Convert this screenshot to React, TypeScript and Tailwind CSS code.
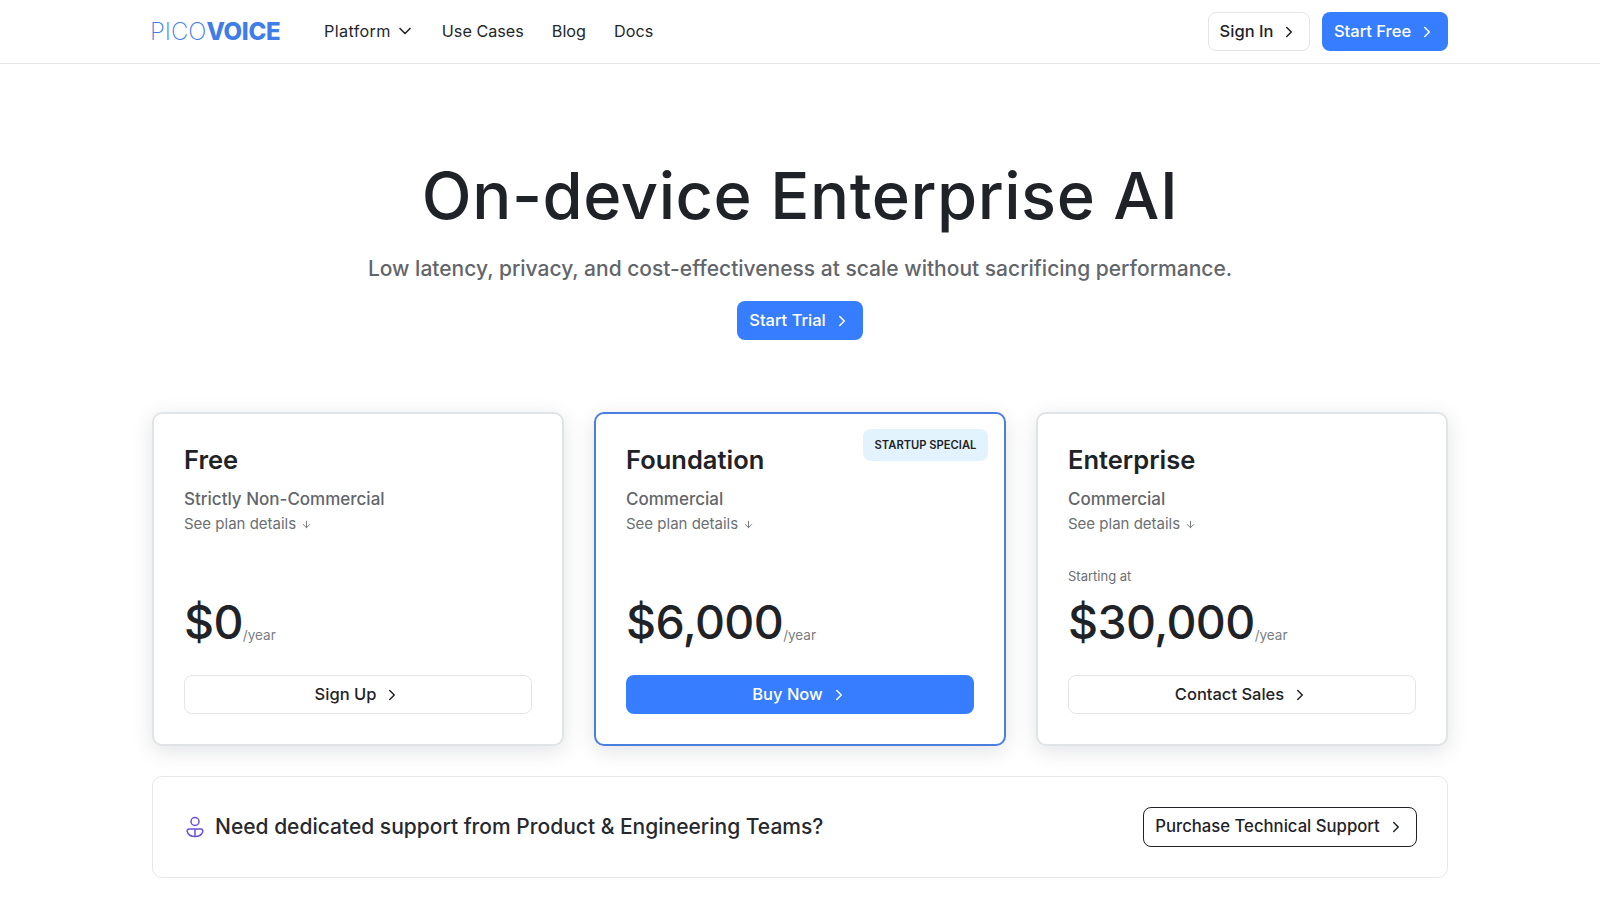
import { ChevronDown, ChevronRight, ArrowDown } from "lucide-react";

const plans = [
  { name: "Free", kind: "Strictly Non-Commercial", price: "$0", cta: "Sign Up" },
  { name: "Foundation", kind: "Commercial", price: "$6,000", cta: "Buy Now", featured: true },
  { name: "Enterprise", kind: "Commercial", price: "$30,000", cta: "Contact Sales", from: true },
];

function Chevron({ className = "" }: { className?: string }) {
  return <ChevronRight size={18} strokeWidth={2} className={className} />;
}

function SupportIcon() {
  return (
    <svg width="18" height="22" viewBox="0 0 18 22" fill="none" stroke="#6d4fd8" strokeWidth="1.5">
      <circle cx="9" cy="5.5" r="4" />
      <path d="M3 13h12a2 2 0 0 1 1.8 2.5C16 18.5 13 20.5 9 20.5S2 18.5 1.2 15.5A2 2 0 0 1 3 13Z" />
      <path d="M9 13v7.5" />
    </svg>
  );
}

export default function App() {
  return (
    <div className="min-h-[900px] overflow-hidden bg-white font-['Inter',sans-serif] text-[#1f2328]">
      <header className="h-[64px] border-b border-[#e3e5e7]">
        <div className="mx-auto flex h-[63px] w-[1296px] items-center">
          <div className="-ml-[2px] flex w-[132px] items-baseline text-[24px] leading-none text-[#3f7de8]">
            <span className="font-extralight">PICO</span>
            <span className="font-extrabold tracking-[-0.3px]">VOICE</span>
          </div>
          <nav className="ml-[42px] flex items-center text-[16.2px] text-[#23272c]">
            <span className="flex items-center gap-[4px] tracking-[0.35px]">Platform <ChevronDown size={20} strokeWidth={2} /></span>
            <span className="ml-[27px]">Use Cases</span>
            <span className="ml-[28px]">Blog</span>
            <span className="ml-[28px]">Docs</span>
          </nav>
          <div className="ml-auto flex items-center gap-[12px] text-[16.5px] font-medium">
            <button className="flex h-[39px] w-[102px] items-center justify-center gap-[7px] rounded-[8px] border border-[#e3e5e7] bg-white">
              Sign In <Chevron />
            </button>
            <button className="flex h-[39px] w-[126px] items-center justify-center gap-[7px] rounded-[8px] bg-[#377dff] text-white">
              Start Free <Chevron />
            </button>
          </div>
        </div>
      </header>

      <main className="mx-auto w-[1296px]">
        <section className="flex flex-col items-center pt-[90px]">
          <h1 className="text-[65px] leading-[84px] font-medium tracking-[0.55px] text-[#1f2328]">On-device Enterprise AI</h1>
          <p className="mt-[16px] text-[21px] leading-[30px] font-medium text-[#62666b]">
            Low latency, privacy, and cost-effectiveness at scale without sacrificing performance.
          </p>
          <button className="mt-[17px] flex h-[39px] w-[126px] items-center justify-center gap-[7px] rounded-[8px] bg-[#377dff] text-[16.5px] font-medium text-white">
            Start Trial <Chevron />
          </button>
        </section>

        <section className="mt-[72px] grid grid-cols-3 gap-[30px]">
          {plans.map((p) => (
            <div
              key={p.name}
              className={`relative h-[334px] rounded-[10px] border-2 bg-white px-[30px] pt-[28px] shadow-[0_5px_20px_rgba(60,70,80,0.15)] ${
                p.featured ? "border-[#4a7fe0]" : "border-[#e1e4e6]"
              }`}
            >
              {p.featured && (
                <span className="absolute top-[15px] right-[16px] flex h-[32px] w-[125px] items-center justify-center rounded-[8px] bg-[#e3f3fd] text-[11.2px] font-semibold text-[#1f2328]">
                  STARTUP SPECIAL
                </span>
              )}
              <h2 className="text-[25.5px] leading-[36px] font-semibold">{p.name}</h2>
              <p className="mt-[8px] text-[17px] leading-[26px] font-medium text-[#62666b]">{p.kind}</p>
              <p className="flex h-[24px] items-center gap-[5px] text-[15px] text-[#6b6f74]">
                See plan details <ArrowDown size={11} />
              </p>
              <p className="mt-[30px] h-[20px] text-[13px] leading-[20px] text-[#6b6f74]">{p.from ? "Starting at" : ""}</p>
              <div className="mt-[8px] flex h-[56px] items-end">
                <span className="text-[46.5px] leading-[56px] font-medium tracking-[-0.6px]">{p.price}</span>
                <span className="mb-[6px] text-[13.5px] leading-[18px] text-[#7a7e83]">/year</span>
              </div>
              <button
                className={`mt-[25px] flex h-[39px] w-full items-center justify-center gap-[7px] rounded-[8px] text-[16.5px] font-medium ${
                  p.featured ? "bg-[#377dff] text-white" : "border border-[#e3e5e7] bg-white"
                }`}
              >
                {p.cta} <Chevron />
              </button>
            </div>
          ))}
        </section>

        <section className="mt-[30px] flex h-[102px] items-center justify-between rounded-[10px] border border-[#e6e8ea] px-[30px]">
          <div className="flex items-center gap-[11px]">
            <span className="ml-[3px] flex"><SupportIcon /></span>
            <span className="text-[21px] font-medium text-[#26292e]">Need dedicated support from Product &amp; Engineering Teams?</span>
          </div>
          <button className="flex h-[40px] w-[274px] items-center justify-center gap-[7px] rounded-[8px] border border-[#1f2328] bg-white text-[16.7px] font-medium">
            Purchase Technical Support <Chevron />
          </button>
        </section>
      </main>
    </div>
  );
}
